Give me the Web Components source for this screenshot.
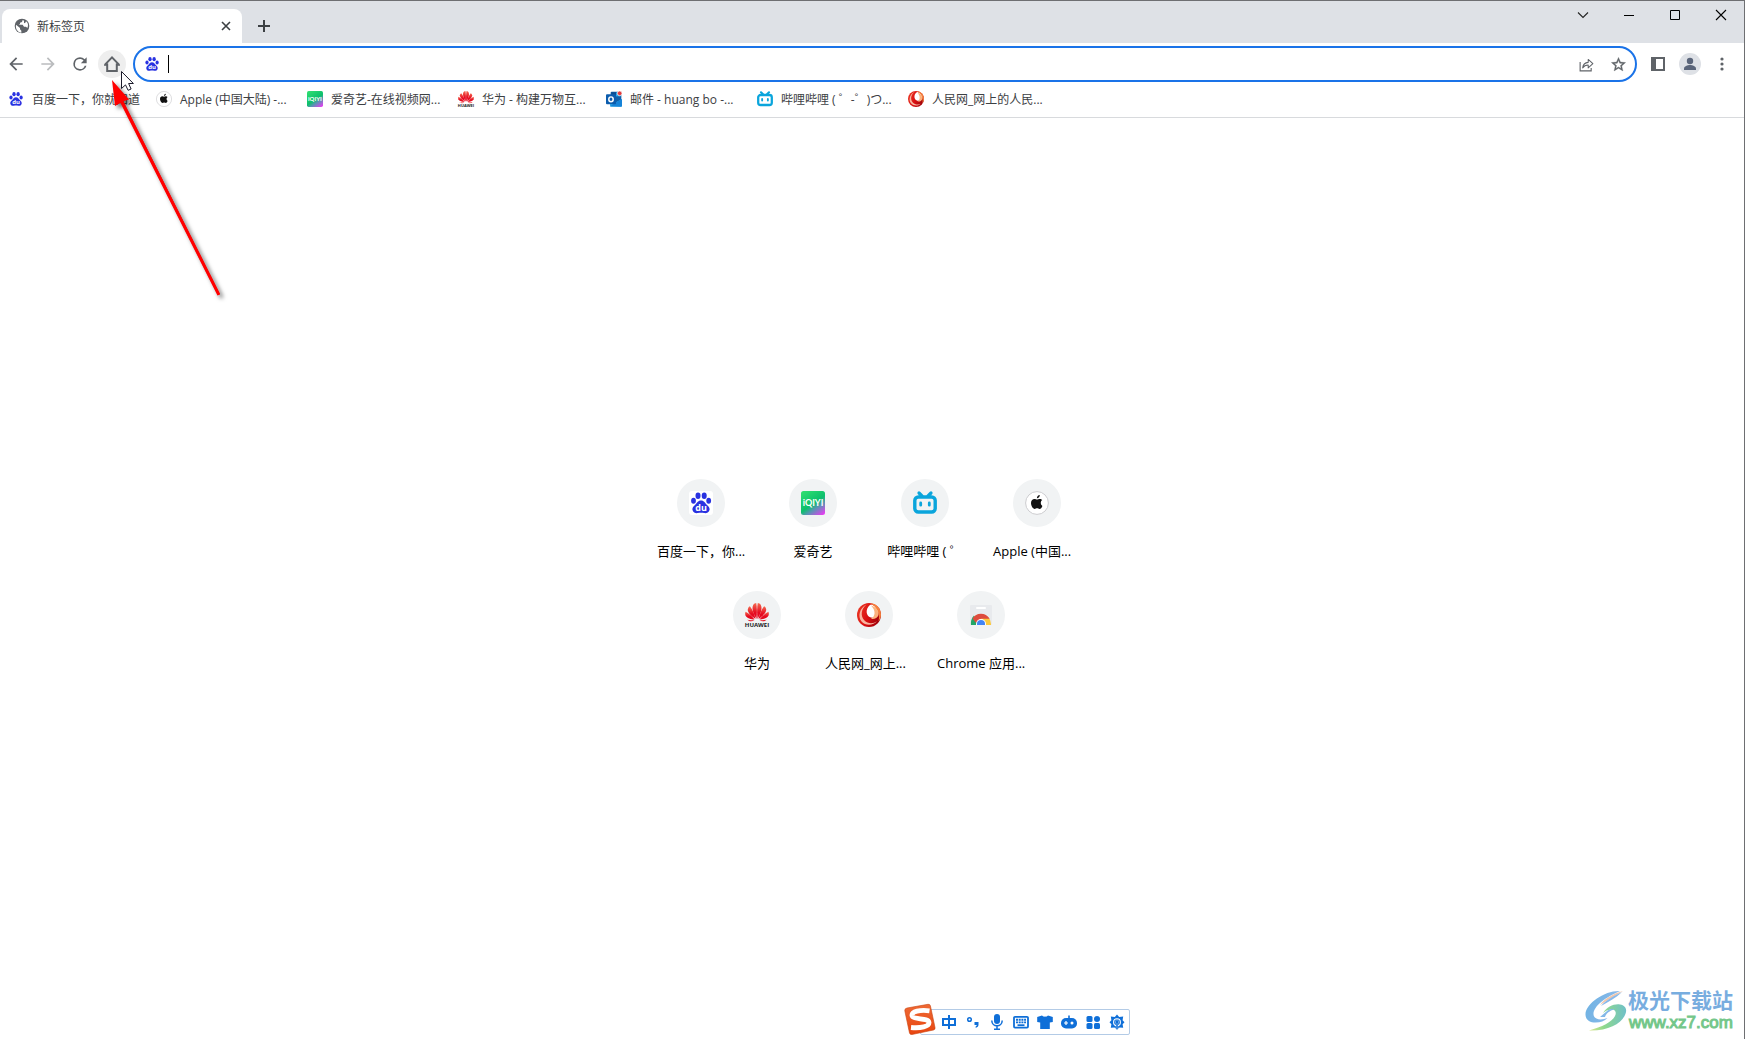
<!DOCTYPE html>
<html lang="zh-CN">
<head>
<meta charset="utf-8">
<title>新标签页</title>
<style>
  html, body { margin: 0; height: 100%; }
  body {
    font: 12px/16px "Open Sans", "Noto Sans CJK SC", sans-serif;
    color: #3c4043; background: #fff; overflow: hidden;
  }
</style>
</head>
<body>
<browser-window></browser-window>
<script>
const ICONS = {
  globe: ['0 0 24 24', '<circle cx="12" cy="12" r="11" fill="#5f6368"/><path d="M3 10l6 5v2l2 2v3C6 21 2 17 3 10zM13 3l-1 3-3 1v2l-2 1h6l2 3h3l2 2c2-4 1-8-2-10l-1 2-2 1V4z" fill="#fff"/>'],
  close: ['0 0 16 16', '<path d="M4 4l8 8M12 4l-8 8" stroke="#3c4043" stroke-width="1.6"/>'],
  plus: ['0 0 16 16', '<path d="M8 2v12M2 8h12" stroke="#3c4043" stroke-width="2"/>'],
  back: ['0 0 24 24', '<path fill="#5f6368" d="M20 11H7.83l5.59-5.59L12 4l-8 8 8 8 1.41-1.41L7.83 13H20z"/>'],
  forward: ['0 0 24 24', '<path fill="#babcbe" d="M4 11h12.17l-5.59-5.59L12 4l8 8-8 8-1.41-1.41L16.17 13H4z"/>'],
  reload: ['0 0 24 24', '<path fill="#5f6368" d="M17.65 6.35A7.95 7.95 0 0 0 12 4a8 8 0 1 0 7.73 10h-2.08A6 6 0 1 1 12 6c1.66 0 3.14.69 4.22 1.78L13 11h7V4z"/>'],
  home: ['0 0 20 20', '<path d="M3 10.6L10 3.4l7 7.2M5.200 9.500V17h9.600V9.500" fill="none" stroke="#5f6368" stroke-width="2"/><path d="M2 11h4M14 11h4" stroke="#5f6368" stroke-width="1.500"/>'],
  share: ['0 0 20 20', '<path d="M2.500 7v10.500h13V14" fill="none" stroke="#5f6368" stroke-width="1.300"/><path d="M5.500 14c.4-4 2.600-6.300 6.500-6.500V4l5.500 5-5.500 5v-3.500c-3 0-5 1-6.500 3.500z" fill="none" stroke="#5f6368" stroke-width="1.200" stroke-linejoin="round"/>'],
  star: ['0 0 24 24', '<path fill="#5f6368" stroke="#5f6368" stroke-width=".5" d="M22 9.240l-7.190-.62L12 2 9.190 8.630 2 9.240l5.460 4.730L5.820 21 12 17.270 18.180 21l-1.630-7.030zM12 15.400l-3.760 2.270 1-4.280-3.320-2.880 4.380-.38L12 6.100l1.710 4.040 4.380.38-3.320 2.880 1 4.280z"/>'],
  panel: ['0 0 16 16', '<path d="M1 1h14v14H1zM6 3v10h7V3z" fill="#5f6368" fill-rule="evenodd"/>'],
  person: ['0 0 22 22', '<circle cx="11" cy="11" r="11" fill="#dee1e6"/><circle cx="11" cy="8" r="3.200" fill="#5a657a"/><path d="M5 17v-1.500c0-2.300 3.500-3.500 6-3.500s6 1.200 6 3.500V17z" fill="#5a657a"/>'],
  dots: ['0 0 16 16', '<g fill="#5f6368"><circle cx="8" cy="3" r="1.600"/><circle cx="8" cy="8" r="1.600"/><circle cx="8" cy="13" r="1.600"/></g>'],
  chevron: ['0 0 12 12', '<path d="M1 3.500l5 5 5-5" fill="none" stroke="#222" stroke-width="1.100"/>'],
  min: ['0 0 12 12', '<path d="M1 6.500h10" stroke="#000"/>'],
  max: ['0 0 12 12', '<path d="M1.500 1.500h9v9h-9z" fill="none" stroke="#000"/>'],
  exit: ['0 0 12 12', '<path d="M1 1l10 10M11 1L1 11" stroke="#000" stroke-width="1.100"/>'],
  baidu: ['0 0 24 24', '<rect width="24" height="24" rx="3" fill="#fff"/><g fill="#2932e1"><ellipse cx="4.500" cy="9.800" rx="2.400" ry="3"/><ellipse cx="9" cy="4.800" rx="2.500" ry="3.200"/><ellipse cx="15.200" cy="4.800" rx="2.500" ry="3.200"/><ellipse cx="19.700" cy="9.800" rx="2.400" ry="3"/><path d="M12 9.500c3.200 0 4 2.800 6 4.500 1.800 1.600 2.900 3 2.500 5-.7 3-3.500 3.400-5.300 3.100-2.200-.4-4.200-.4-6.400 0-1.800.3-4.600-.1-5.300-3.100-.4-2 .7-3.400 2.500-5 2-1.700 2.800-4.500 6-4.500z"/></g><text x="12" y="20.200" text-anchor="middle" font-family="Open Sans, sans-serif" font-weight="700" font-size="9" fill="#fff">du</text>'],
  apple: ['0 0 24 24', '<circle cx="12" cy="12" r="11.400" fill="#fff" stroke="#cdcdd0" stroke-width="1"/><path d="M14.800 4c.1 1.800-1.300 3.300-2.900 3.300C11.700 5.700 13.200 4.200 14.800 4zM17.400 14.900c-.7 1.700-1.600 3-2.900 3-1 0-1.300-.6-2.400-.6s-1.500.6-2.400.6c-1.900 0-3.700-3.300-3.700-5.900 0-2.700 1.700-4.100 3.400-4.100 1 0 1.900.7 2.700.7.700 0 1.800-.8 3-.7.600 0 1.600.3 2.200 1.200-2.200 1.400-1.800 4.700.1 5.800z" fill="#111"/>'],
  iqiyi: ['0 0 24 24', '<defs><linearGradient id="q" x1=".2" y1="0" x2=".9" y2="1"><stop offset="0" stop-color="#2ddc70"/><stop offset=".5" stop-color="#0cbf6c"/><stop offset=".68" stop-color="#5994b4"/><stop offset="1" stop-color="#e83bf2"/></linearGradient></defs><rect width="24" height="24" rx="2.500" fill="url(#q)"/><text x="12" y="15.200" text-anchor="middle" font-family="Lato, sans-serif" font-weight="700" font-size="9" fill="#fff">iQIYI</text>'],
  bili: ['0 0 24 24', '<rect x="1.800" y="6" width="20.400" height="15" rx="3.500" fill="none" stroke="#0aa5dc" stroke-width="3.400"/><path d="M6 2l3 3M18 2l-3 3" stroke="#0aa5dc" stroke-width="3.200" stroke-linecap="round"/><path d="M7.700 12v2.200M16.300 12v2.200" stroke="#0aa5dc" stroke-width="2.800" stroke-linecap="round"/>'],
  huawei: ['0 0 24 24', '<defs><linearGradient id="h" x1="0" y1="0" x2="0" y2="1"><stop offset="0" stop-color="#f46a50"/><stop offset=".6" stop-color="#e60b20"/></linearGradient></defs><g fill="url(#h)"><path d="M11.500 16C8.500 11 6.300 5.500 8.200 2c.8-1.300 2-1.700 3-1.900.8 4 .9 10 .3 15.900z"/><path d="M12.500 16c3-5 5.200-10.500 3.300-14-.8-1.300-2-1.700-3-1.900-.8 4-.9 10-.3 15.900z"/><path d="M10.500 16C6 13 2.500 9.500 2.800 6.500 3 5 3.700 4 4.900 3.300 7.500 6.500 9.500 11 10.500 16z"/><path d="M13.500 16c4.500-3 8-6.500 7.700-9.500-.2-1.500-.9-2.500-2.100-3.200C16.500 6.500 14.500 11 13.500 16z"/><path d="M9.500 16.500C6 16.300 1.800 15.500.5 12.500c-.5-1.300-.4-2.700.1-3.800C4 10.500 7.300 13.300 9.500 16.500z"/><path d="M14.500 16.500c3.500-.2 7.700-1 9-4 .5-1.300.4-2.700-.1-3.800-3.400 1.800-6.700 4.600-8.900 7.800z"/><path d="M9.500 17.400c-2 1-5.500 1.600-7.300-.9 2 .7 5 .9 7.300.9zM14.500 17.400c2 1 5.500 1.600 7.300-.9-2 .7-5 .9-7.300.9z"/></g><text x="12" y="23.900" text-anchor="middle" font-family="Open Sans, sans-serif" font-weight="700" font-size="6" fill="#222">HUAWEI</text>'],
  outlook: ['0 0 24 24', '<rect x="7" y="1" width="16" height="20" rx="1.500" fill="#0f5fa8"/><path d="M8 2h7v6H8z" fill="#0a4d93"/><path d="M15 2h7v6h-7z" fill="#28a8ea"/><path d="M7 8h7v7H7z" fill="#0f78d4"/><path d="M6 12l9 5 9-5v10a1.500 1.500 0 0 1-1.500 1.500h-15A1.500 1.500 0 0 1 6 22z" fill="#32b0ee"/><path d="M6 23l9-6 9-5v10a1.500 1.500 0 0 1-1.500 1.500z" fill="#1683d8"/><rect y="5" width="15" height="15" rx="1.500" fill="#0b5cad"/><ellipse cx="7.500" cy="12.500" rx="3.300" ry="3.700" fill="none" stroke="#fff" stroke-width="2.200"/><circle cx="20.500" cy="3.500" r="3.500" fill="#e33b3b" stroke="#fff"/>'],
  people: ['0 0 24 24', '<defs><linearGradient id="p" x1="0" y1=".3" x2="1" y2=".7"><stop offset="0" stop-color="#ea3423"/><stop offset=".5" stop-color="#d80e10"/><stop offset="1" stop-color="#98000a"/></linearGradient></defs><circle cx="12" cy="12" r="12" fill="url(#p)"/><path d="M9.500 1.500C4 6 3.200 13 7.500 17.500c3.500 3.500 9 3.600 12.500.5-4 5-11.500 5-15.500.500C.5 13.500 2.500 5 9.500 1.500z" fill="#f8b5a0"/><path d="M11.500 3.500C9.500 6 9 9.500 10.500 12c1.800 3 6 3.600 9 1.200 1.600-1.300 2.300-3.400 1.700-5.600C20.400 4.600 17 2 14 1.500c-1 .4-1.800 1.100-2.500 2z" fill="#fff"/><path d="M13 .3C19 .3 24 5 24 11.500c0 2.700-1 5-2.500 6.800C23.500 11 20 4 13 .3z" fill="#f5803d"/><path d="M14 2.500c5 1.500 8 5.500 7.500 9.500-1 3-4.500 4.500-7.500 3.700 4.500-2.200 5-8.200 0-13.200z" fill="#fbb27d"/>'],
  store: ['0 0 24 24', '<rect x="1" y="2" width="22" height="20" rx="1" fill="#e8eaed"/><path d="M8 5h8" stroke="#fff" stroke-width="2" stroke-linecap="round"/><clipPath id="s"><path d="M1 9h22v13H1z"/></clipPath><g clip-path="url(#s)"><circle cx="12" cy="21" r="10" fill="#fbc93c"/><path d="M2 22c-.5-5 1.500-8 3-9.500L9 22z" fill="#23a566"/><path d="M3.500 15.500C7 9 17 9 20.700 15.800H12L7 20z" fill="#dd4b3e"/><circle cx="12" cy="21" r="5" fill="#fff"/><circle cx="12" cy="21" r="4" fill="#4285f4"/></g>'],
  zhong: ['0 0 16 16', '<path d="M2 5h12v6H2zM8 1v14" fill="none" stroke="#0f6fd8" stroke-width="2"/>'],
  punct: ['0 0 16 16', '<circle cx="4.500" cy="5.500" r="1.800" fill="none" stroke="#0f6fd8" stroke-width="1.500"/><path d="M9.500 8h4v2.800c0 1.500-1 2.600-2.800 3.100v-1.600c.7-.2 1-.5 1.100-1.200H9.500z" fill="#0f6fd8"/>'],
  mic: ['0 0 16 16', '<rect x="5" y="0" width="6" height="10" rx="3" fill="#0f6fd8"/><path d="M2.800 6.500c0 7 10.400 7 10.400 0M8 12v3.500M5 15.200h6" fill="none" stroke="#0f6fd8" stroke-width="1.500"/>'],
  keys: ['0 0 16 16', '<rect x="1" y="2.800" width="14" height="10.800" rx="1" fill="#fff" stroke="#0f6fd8" stroke-width="1.800"/><path d="M3 5.800h10M3 8.400h10" stroke="#0f6fd8" stroke-width="1.900" stroke-dasharray="2 .7"/><path d="M4.500 11.200h7" stroke="#0f6fd8" stroke-width="1.800"/>'],
  shirt: ['0 0 16 16', '<path d="M5 1.500c1.500 1.600 4.500 1.600 6 0L15.800 3v5l-3 .5V15H3.200V8.500L.2 8V3z" fill="#0f6fd8"/>'],
  game: ['0 0 16 16', '<path d="M7.200 4V1.500h1.600V4z" fill="#0f6fd8"/><rect y="4" width="16" height="10.500" rx="5" fill="#0f6fd8"/><path d="M3 9h4M5 7v4" stroke="#fff" stroke-width="1.200"/><circle cx="11" cy="9" r="1.500" fill="#fff"/>'],
  grid: ['0 0 16 16', '<g fill="#0f6fd8"><rect x="1.500" y="2" width="6" height="6" rx="1.500"/><rect x="9" y="2" width="6" height="6" rx="3"/><rect x="1.500" y="9" width="6" height="6" rx="1.500"/><rect x="9" y="9" width="6" height="6" rx="1.500"/></g>'],
  gear: ['0 0 16 16', '<path d="M8 .5l2.200 2.500 4-.4-.6 3.600 1.900 2.100-1.900 2 .6 3.500-3.700-.3L8 15.500l-2.500-2-3.700.3.600-3.500-1.900-2 1.900-2.100-.6-3.600 4 .4z" fill="#0f6fd8"/><circle cx="8" cy="8.200" r="3.400" fill="none" stroke="#fff" stroke-width="1.100"/><path d="M8 5l2 3-1 1v6.500H7V9L6 8z" fill="#0f6fd8" stroke="#fff" stroke-width=".4"/>']
};

class Base extends HTMLElement {
  connectedCallback() {
    if (this.shadowRoot) return;
    const root = this.attachShadow({ mode: 'open' });
    root.innerHTML = `<style>*{box-sizing:border-box}:host{display:block;box-sizing:border-box}button{font:inherit;color:inherit;border:0;padding:0;margin:0;background:none;display:flex;align-items:center;justify-content:center}a{color:inherit;text-decoration:none}${this.css()}</style>${this.html()}`;
  }
  css() { return ''; }
  html() { return ''; }
}
const define = (name, css, html) => customElements.define(name, class extends Base {
  css() { return css; }
  html() { return typeof html === 'function' ? html(this) : html; }
});

define('ui-icon', ':host{flex:none;width:var(--size,16px);height:var(--size,16px)}svg{display:block;width:100%;height:100%;overflow:visible}', el => {
  const [box, body] = ICONS[el.getAttribute('name')];
  return `<svg viewBox="${box}" aria-hidden="true">${body}</svg>`;
});

define('browser-tab', `
  :host{flex:none;width:240px;height:34px;margin-left:2px;padding:0 8px 0 12px;display:flex;align-items:center;background:#fff;border-radius:8px 8px 0 0}
  .globe{margin-right:7px}
  span{flex:1;padding-top:2px}
`, '<ui-icon class="globe" name="globe"></ui-icon><span><slot></slot></span><button aria-label="关闭标签页"><ui-icon name="close"></ui-icon></button>');

define('window-controls', `
  :host{display:flex;margin-left:auto;align-self:flex-start}
  button{width:46px;height:28px}
  ui-icon{--size:12px}
`, [['chevron', '搜索标签页'], ['min', '最小化'], ['max', '最大化'], ['exit', '关闭']].map(([n, t]) => `<button aria-label="${t}"><ui-icon name="${n}"></ui-icon></button>`).join(''));

define('tab-strip', `
  :host{display:flex;align-items:flex-end;height:43px;background:#dee1e6;border-top:1px solid #6e6f72}
  .new{width:28px;height:34px;margin-left:8px}
`, '<browser-tab>新标签页</browser-tab><button class="new" aria-label="新标签页"><ui-icon name="plus"></ui-icon></button><window-controls></window-controls>');

define('omni-box', `
  :host{flex:1;min-width:0}
  form{display:flex;align-items:center;height:36px;margin:0;padding:0 3px 0 9px;border:2px solid #1a73e8;border-radius:18px;background:#fff}
  .caret{flex:none;width:1px;height:18px;margin-left:8px;background:#000}
  input{flex:1;min-width:0;height:28px;border:0;outline:0;padding:0;background:none;font:inherit;font-size:14px}
  button{width:28px;height:28px;margin-left:4px}
  button ui-icon{--size:17px}
`, '<form><ui-icon name="baidu"></ui-icon><span class="caret"></span><input type="text" aria-label="地址和搜索栏"><button type="button" aria-label="分享"><ui-icon name="share"></ui-icon></button><button type="button" aria-label="收藏"><ui-icon name="star"></ui-icon></button></form>');

define('nav-toolbar', `
  :host{display:flex;align-items:center;gap:4px;height:41px;padding:3px 8px 2px 2px}
  button{flex:none;width:28px;height:28px;border-radius:14px}
  .home{background:#eeeeee}
  .nav,.home ui-icon{--size:20px}
  omni-box{margin:0 3px}
  .person{--size:22px}
`, `<button aria-label="后退"><ui-icon class="nav" name="back"></ui-icon></button>
  <button aria-label="前进"><ui-icon class="nav" name="forward"></ui-icon></button>
  <button aria-label="重新加载"><ui-icon class="nav" name="reload"></ui-icon></button>
  <button class="home" aria-label="主页"><ui-icon name="home"></ui-icon></button>
  <omni-box></omni-box>
  <button aria-label="侧边栏"><ui-icon name="panel"></ui-icon></button>
  <button aria-label="用户"><ui-icon class="person" name="person"></ui-icon></button>
  <button aria-label="菜单"><ui-icon name="dots"></ui-icon></button>`);

define('bookmark-link', `
  :host{flex:none}
  a{display:flex;align-items:center;gap:8px}
  span{white-space:nowrap;width:111px;padding-top:2px}
  :host([short]) span{width:108px}
`, el => `<a href="#"><ui-icon name="${el.getAttribute('icon')}"></ui-icon><span><slot></slot></span></a>`);

define('bookmarks-bar', `
  :host{display:flex;align-items:center;gap:16px;height:34px;padding:0 8px 4px;border-bottom:1px solid #d8dadd}
`, `<bookmark-link short icon="baidu">百度一下，你就知道</bookmark-link>
  <bookmark-link icon="apple">Apple (中国大陆) -...</bookmark-link>
  <bookmark-link icon="iqiyi">爱奇艺-在线视频网...</bookmark-link>
  <bookmark-link short icon="huawei">华为 - 构建万物互...</bookmark-link>
  <bookmark-link icon="outlook">邮件 - huang bo -...</bookmark-link>
  <bookmark-link icon="bili">哔哩哔哩 ( ゜-゜)つ...</bookmark-link>
  <bookmark-link icon="people">人民网_网上的人民...</bookmark-link>`);

define('shortcut-tile', `
  :host{width:112px;height:112px}
  a{display:flex;flex-direction:column;align-items:center;gap:14px;font-size:13px;line-height:20px;color:#000}
  .disc{width:48px;height:48px;border-radius:50%;background:#f1f3f4;display:flex;align-items:center;justify-content:center;--size:24px}
  .label{width:88px;white-space:nowrap;text-align:center}
  :host([cut]) .label{text-align:left}
`, el => `<a href="#"><span class="disc"><ui-icon name="${el.getAttribute('icon')}"></ui-icon></span><span class="label"><slot></slot></span></a>`);

define('new-tab-page', `
  :host{flex:1;display:flex;flex-direction:column;justify-content:center;align-items:center;padding:24px 6px 0 0}
  .row{display:flex}
`, `<div class="row">
    <shortcut-tile cut icon="baidu">百度一下，你...</shortcut-tile>
    <shortcut-tile icon="iqiyi">爱奇艺</shortcut-tile>
    <shortcut-tile icon="bili">哔哩哔哩 ( ゜</shortcut-tile>
    <shortcut-tile cut icon="apple">Apple (中国...</shortcut-tile>
  </div>
  <div class="row">
    <shortcut-tile icon="huawei">华为</shortcut-tile>
    <shortcut-tile cut icon="people">人民网_网上...</shortcut-tile>
    <shortcut-tile cut icon="store">Chrome 应用...</shortcut-tile>
  </div>`);

define('ime-bar', `
  :host{position:absolute;left:904px;bottom:4px;display:flex;align-items:flex-end}
  .logo{width:32px;height:32px;flex:none;z-index:1}
  .keys{display:flex;gap:8px;height:26px;align-items:center;margin-left:-16px;padding:0 4px 0 20px;border:1px solid #b3cbe6;border-radius:2px;background:#fff}
`, `<svg class="logo" viewBox="0 0 32 31" role="img" aria-label="输入法"><defs><linearGradient id="o" x2="0" y2="1"><stop stop-color="#ee6a35"/><stop offset="1" stop-color="#e8450f"/></linearGradient></defs><path d="M3 4.500L24 .8q2-.3 2.400 1.500L31 24q.4 2-1.500 2.500L8 31q-2 .3-2.500-1.500L.8 7.300Q.5 5 3 4.500z" fill="url(#o)" stroke="#c9430f" stroke-width=".6"/><path d="M25.500 7.300C16 6 7.500 8 8 12c.7 4.500 16.500 2 17 7 .3 4-8.500 6-18 5" fill="none" stroke="#fff" stroke-width="4.800"/></svg>
  <div class="keys">${[['zhong', '中文'], ['punct', '标点'], ['mic', '语音'], ['keys', '键盘'], ['shirt', '皮肤'], ['game', '游戏'], ['grid', '工具'], ['gear', '设置']].map(([n, t]) => `<button aria-label="${t}"><ui-icon name="${n}"></ui-icon></button>`).join('')}</div>`);

define('site-mark', `
  :host{position:absolute;right:11px;bottom:6px;display:flex;align-items:center;font-family:"Liberation Sans","Noto Sans CJK SC",sans-serif}
  svg{width:44px;height:44px}
  .name{font-size:21px;line-height:24px;font-weight:700;color:#78addf}
  .url{font-size:17px;line-height:20px;color:#74c78a;-webkit-text-stroke:1px #74c78a;padding-left:1px}
`, `<svg viewBox="0 0 44 44" aria-hidden="true"><defs><linearGradient id="a" x2="1" y2=".3"><stop stop-color="#6cb2e2"/><stop offset="1" stop-color="#8cb9ea"/></linearGradient><linearGradient id="b" x2="1" y2="0"><stop stop-color="#dbe58a"/><stop offset=".4" stop-color="#8fd98c"/><stop offset="1" stop-color="#6fc0c8"/></linearGradient></defs>
  <path d="M36 2C22 1 2 14 1.500 25c-.3 6 4.500 8.500 10 8.500 5 0 9-1.500 12-4.500-6 2.500-14 2-14-4C9.500 17 22 8 36 2z" fill="url(#a)"/>
  <path d="M39 2C28 5 20 10 16 16c7-5 16-9 23-14z" fill="#f0c6ac"/>
  <path d="M38 3C30 7 22 11 17 17c7-4 15-8 21-14z" fill="#86b8ea"/>
  <path d="M19 24c4-6 11-9.500 17-8.500 6 1 7.500 5.500 5 10.500C37 35 24 42 5 41.500 18 38 28 33 31 27c2-4 0-7-4-6.500-3 .3-6 1.500-8 3.500z" fill="url(#b)"/>
  <path d="M16 28l7-6c3-2 6-2.500 7-1.500-4 1-8 4-9 7.500z" fill="#83b8e8"/></svg>
  <div><div class="name">极光下载站</div><div class="url">www.xz7.com</div></div>`);

define('pointer-arrow', `
  :host{position:absolute;left:100px;top:66px;width:150px;height:250px;pointer-events:none}
  svg{display:block;width:100%;height:100%;overflow:visible}
  .red{filter:drop-shadow(3px 3px 2px rgba(0,0,0,.55))}
`, `<svg viewBox="100 66 150 250" aria-hidden="true"><path d="M121.500 71.500v17l4-3.600 2.600 5.400 3-1.300-2.500-5.500h4.800z" fill="#fff" stroke="#1c1c2c" stroke-width="1"/>
  <g class="red"><path d="M112 80l17 19.500-5.500 1.800L220 294.500l-2.500 1-97-192.500-5.500 3z" fill="#f00"/><path d="M122 102l97 192.500" stroke="#f00" stroke-width="2.600"/></g></svg>`);

define('browser-window', `
  :host{position:relative;display:flex;flex-direction:column;height:100vh;border-right:1px solid #6e6f72;background:#fff}
`, '<tab-strip></tab-strip><nav-toolbar></nav-toolbar><bookmarks-bar></bookmarks-bar><new-tab-page></new-tab-page><ime-bar></ime-bar><site-mark></site-mark><pointer-arrow></pointer-arrow>');
</script>
</body>
</html>
